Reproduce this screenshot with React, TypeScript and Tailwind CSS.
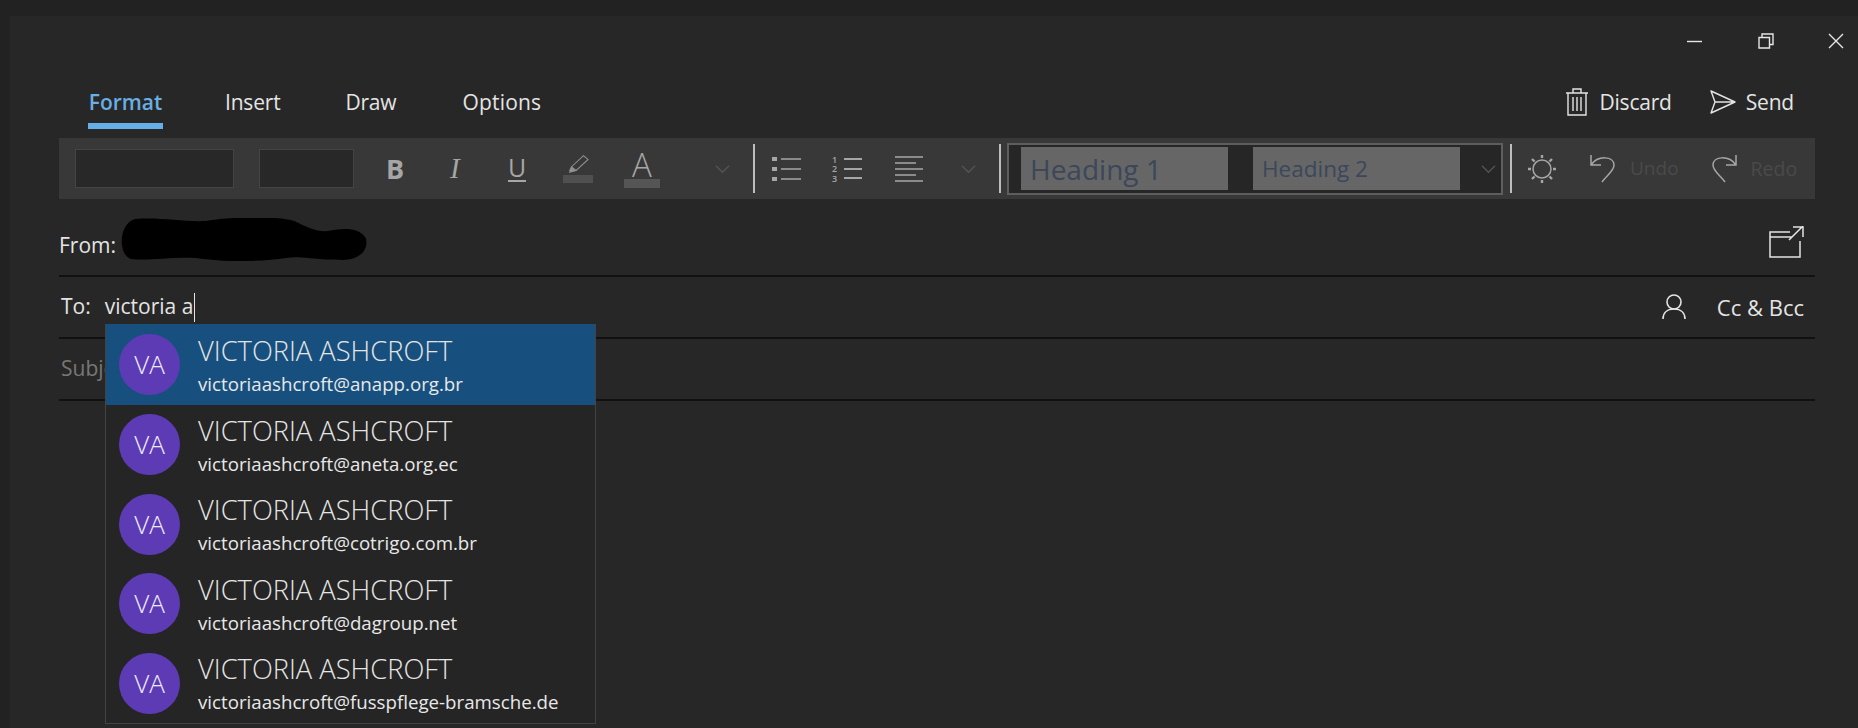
import React from 'react';

const font = { fontFamily: '"Open Sans", sans-serif' };

const contacts = [
  'victoriaashcroft@anapp.org.br',
  'victoriaashcroft@aneta.org.ec',
  'victoriaashcroft@cotrigo.com.br',
  'victoriaashcroft@dagroup.net',
  'victoriaashcroft@fusspflege-bramsche.de',
];

function Chevron({ className }: { className: string }) {
  return (
    <svg viewBox="0 0 16 10" className={className} fill="none" stroke="currentColor" strokeWidth="1.3">
      <path d="M1 1.5 8 8.5 15 1.5" />
    </svg>
  );
}

function WindowControls() {
  return (
    <div className="flex h-[50px] items-center justify-end pr-[14px] text-[#e6e6e6]">
      <svg viewBox="0 0 16 16" className="h-4 w-4" stroke="currentColor" strokeWidth="1.4">
        <path d="M0 8.5h15" />
      </svg>
      <svg viewBox="0 0 16 16" className="ml-[55px] h-4 w-4" fill="none" stroke="currentColor" strokeWidth="1.4">
        <path d="M1 4.5h10.5V15H1zM4 4.5V1h11v10.5h-3.5" />
      </svg>
      <svg viewBox="0 0 16 16" className="ml-[54px] h-4 w-4" fill="none" stroke="currentColor" strokeWidth="1.4">
        <path d="M1 1l14 14M15 1 1 15" />
      </svg>
    </div>
  );
}

function Tabs() {
  return (
    <div className="ml-[49px] mr-[43px] flex h-[63px] items-start text-[21px] tracking-[-0.2px] text-[#e4e4e4]">
      <div className="ml-[29px] flex h-[63px] w-[75px] flex-col items-center border-b-[6px] border-[#65aee6] pt-[21px] font-semibold tracking-normal text-[#6aaee3]">
        <span className="leading-[30px]">Format</span>
      </div>
      <span className="ml-[62px] pt-[21px] leading-[30px]">Insert</span>
      <span className="ml-[65px] pt-[21px] leading-[30px]">Draw</span>
      <span className="ml-[66px] pt-[21px] leading-[30px] tracking-[0.2px]">Options</span>
      <div className="ml-auto flex items-center pt-[21px]">
        <svg viewBox="0 0 22 28" className="h-[28px] w-[22px]" fill="none" stroke="currentColor" strokeWidth="1.4">
          <path d="M0 5h22M2 5v22h18V5M7 5V1h8v4M7 9v14M11 9v14M15 9v14" />
        </svg>
        <span className="ml-[11px] leading-[30px]">Discard</span>
        <svg viewBox="0 0 26 24" className="ml-[38px] h-[24px] w-[26px]" fill="none" stroke="currentColor" strokeWidth="1.4" strokeLinejoin="round">
          <path d="M1 1 25 12 1 23 5 12zM5 12h20" />
        </svg>
        <span className="ml-[10px] mr-[21px] leading-[30px]">Send</span>
      </div>
    </div>
  );
}

function Toolbar() {
  return (
    <div className="ml-[49px] mr-[43px] mt-[9px] flex h-[61px] items-center bg-[#383838] text-[#a6a6a6]">
      <div className="ml-[16px] h-[39px] w-[159px] border border-[#444] bg-[#282828]" />
      <div className="ml-[25px] h-[39px] w-[95px] border border-[#444] bg-[#282828]" />
      <span className="ml-[32px] w-[18px] text-[27px] font-bold leading-none">B</span>
      <span className="ml-[46px] w-[13px] font-['Liberation_Serif',serif] text-[29px] italic leading-none">I</span>
      <div className="ml-[45px] flex w-[18px] flex-col items-center">
        <span className="text-[25px] leading-[24px]">U</span>
        <span className="mt-[1px] h-[2px] w-[18px] bg-[#a6a6a6]" />
      </div>
      <div className="ml-[37px] flex w-[30px] flex-col items-center">
        <svg viewBox="0 0 24 20" className="h-[20px] w-[22px]" fill="none" stroke="#909090" strokeWidth="1.1">
          <path d="M18 1 23 5 10 17 H3 L5 13Z" />
          <path d="M3 19 5 13 10 17Z" fill="#909090" />
        </svg>
        <span className="mt-[1px] h-[8px] w-[30px] bg-[#505050]" />
      </div>
      <div className="ml-[31px] flex w-[36px] flex-col items-center">
        <span className="text-[33px] font-light leading-[29px]">A</span>
        <span className="h-[9px] w-[36px] bg-[#555]" />
      </div>
      <Chevron className="ml-[55px] h-[10px] w-[15px] text-[#555]" />
      <span className="ml-[23px] h-[49px] w-[2px] bg-[#bdbdbd]" />
      <svg viewBox="0 0 29 26" className="ml-[17px] h-[26px] w-[29px]" stroke="currentColor" strokeWidth="1.5">
        <path d="M9 3h20M9 13h20M9 23h20" />
        <path d="M0 1h5v4H0zM0 11h5v4H0zM0 21h5v4H0z" fill="currentColor" stroke="none" />
      </svg>
      <div className="ml-[31px] flex h-[28px] w-[30px] flex-col justify-between text-[9px] font-semibold leading-[9px]">
        <div className="flex items-center"><span className="w-[12px]">1</span><span className="h-[2px] flex-1 bg-[#a6a6a6]" /></div>
        <div className="flex items-center"><span className="w-[12px]">2</span><span className="h-[2px] flex-1 bg-[#a6a6a6]" /></div>
        <div className="flex items-center"><span className="w-[12px]">3</span><span className="h-[2px] flex-1 bg-[#a6a6a6]" /></div>
      </div>
      <svg viewBox="0 0 28 26" className="ml-[33px] h-[26px] w-[28px]" stroke="currentColor" strokeWidth="1.5">
        <path d="M0 1h28M0 7h21M0 13h28M0 19h21M0 25h28" />
      </svg>
      <Chevron className="ml-[38px] h-[10px] w-[15px] text-[#555]" />
      <span className="ml-[23px] h-[49px] w-[2px] bg-[#bdbdbd]" />
      <div className="ml-[6px] flex h-[52px] w-[496px] items-center border-2 border-[#5e5e5e] bg-[#262626] pl-[12px] text-[#3c475a]">
        <div className="flex h-[43px] w-[207px] items-center bg-[#666] pl-[9px] pt-[1px] text-[28px]">Heading 1</div>
        <div className="ml-[25px] flex h-[43px] w-[207px] items-center bg-[#666] pl-[9px] pt-[1px] text-[22.5px]">Heading 2</div>
        <Chevron className="ml-[21px] h-[10px] w-[15px] text-[#555]" />
      </div>
      <span className="ml-[7px] h-[49px] w-[2px] bg-[#bdbdbd]" />
      <svg viewBox="0 0 28 28" className="ml-[16px] h-[28px] w-[28px]" fill="none" stroke="currentColor" strokeWidth="1.5">
        <circle cx="14" cy="14" r="9" />
        <path d="M14 0v3M14 25v3M0 14h3M25 14h3M4 4l2.5 2.5M24 4l-2.5 2.5M4 24l2.5-2.5M24 24l-2.5-2.5" strokeWidth="2.4" />
      </svg>
      <svg viewBox="0 0 25 29" className="ml-[34px] h-[29px] w-[25px]" fill="none" stroke="currentColor" strokeWidth="1.5">
        <path d="M1 1v10h10M1 11C8 1 24 2 24 11c0 6-7 10-12 17" />
      </svg>
      <span className="ml-[15px] text-[19px] leading-none text-[#4a4a4a]">Undo</span>
      <svg viewBox="0 0 25 29" className="ml-[33px] h-[29px] w-[25px]" fill="none" stroke="currentColor" strokeWidth="1.5">
        <path d="M24 1v10H14M24 11C17 1 1 2 1 11c0 6 7 10 12 17" />
      </svg>
      <span className="ml-[14px] text-[19.5px] leading-none text-[#4a4a4a]">Redo</span>
    </div>
  );
}

function FromRow() {
  return (
    <div className="ml-[49px] mr-[43px] flex h-[78px] items-center border-b-2 border-[#111] pt-[5px] text-[21px] text-[#e4e4e4]">
      <span className="mt-[12px]">From:</span>
      <svg viewBox="0 0 246 42" preserveAspectRatio="none" className="ml-[5px] h-[43px] w-[246px]" fill="#000">
        <path d="M14 1C40-1 60 4 85 3 105-1 150-2 170 2 180 5 190 13 205 13 220 10 238 8 245 20 248 33 236 41 222 41 190 41 180 37 165 39 140 43 100 43 75 39 50 38 25 42 10 40-3 36-3 6 14 1Z" />
      </svg>
      <svg viewBox="0 0 35 32" className="ml-auto mr-[11px] mt-[5px] h-[32px] w-[35px]" fill="none" stroke="currentColor" strokeWidth="1.5">
        <path d="M31 15v16H1V6h20M1 11h22M34 0 20 14M24 1h10v10" />
      </svg>
    </div>
  );
}

function ContactRow({ email, selected }: { email: string; selected: boolean }) {
  return (
    <div className={selected ? 'flex h-[81px] items-center bg-[#17507f] pl-[13px]' : 'flex h-[79.5px] items-center pl-[13px]'}>
      <div className="flex h-[61px] w-[61px] shrink-0 items-center justify-center rounded-full bg-[#5d3bb5] text-[26px] font-light text-[#f0eafa]">
        VA
      </div>
      <div className="ml-[18px] flex flex-col pt-[2px]">
        <span className="text-[27.3px] font-light leading-[32px] text-[#e4e4e4]">VICTORIA ASHCROFT</span>
        <span className="mt-[4px] text-[18.7px] leading-[26px] text-[#e8e8e8]">{email}</span>
      </div>
    </div>
  );
}

function ToRow() {
  return (
    <div className="relative ml-[49px] mr-[43px] flex h-[62px] items-center border-b-2 border-[#111] text-[21px] text-[#e4e4e4]">
      <span className="ml-[2px]">To:</span>
      <span className="ml-[14px]">victoria a</span>
      <span className="ml-[1px] h-[29px] w-[1px] bg-[#e4e4e4]" />
      <svg viewBox="0 0 24 26" className="ml-auto mr-[1px] h-[26px] w-[24px]" fill="none" stroke="currentColor" strokeWidth="1.6">
        <circle cx="12" cy="8" r="7" />
        <path d="M1 25c0-6 4-10 11-10s11 4 11 10" />
      </svg>
      <span className="ml-[30px] mr-[11px] text-[22px]">Cc &amp; Bcc</span>
      <div className="absolute left-[46px] top-[47px] z-10 w-[491px] border border-t-0 border-[#434343] bg-[#252525]">
        {contacts.map((email, i) => (
          <ContactRow key={email} email={email} selected={i === 0} />
        ))}
      </div>
    </div>
  );
}

export default function App() {
  return (
    <div style={font} className="h-[728px] w-[1858px] overflow-hidden bg-[#222] pl-[10px] pt-[16px]">
      <div className="flex h-full flex-col bg-[#272727]">
        <WindowControls />
        <Tabs />
        <Toolbar />
        <FromRow />
        <ToRow />
        <div className="ml-[49px] mr-[43px] flex h-[62px] items-center border-b-2 border-[#111] text-[21px] text-[#777]">
          <span className="ml-[2px]">Subject</span>
        </div>
      </div>
    </div>
  );
}
